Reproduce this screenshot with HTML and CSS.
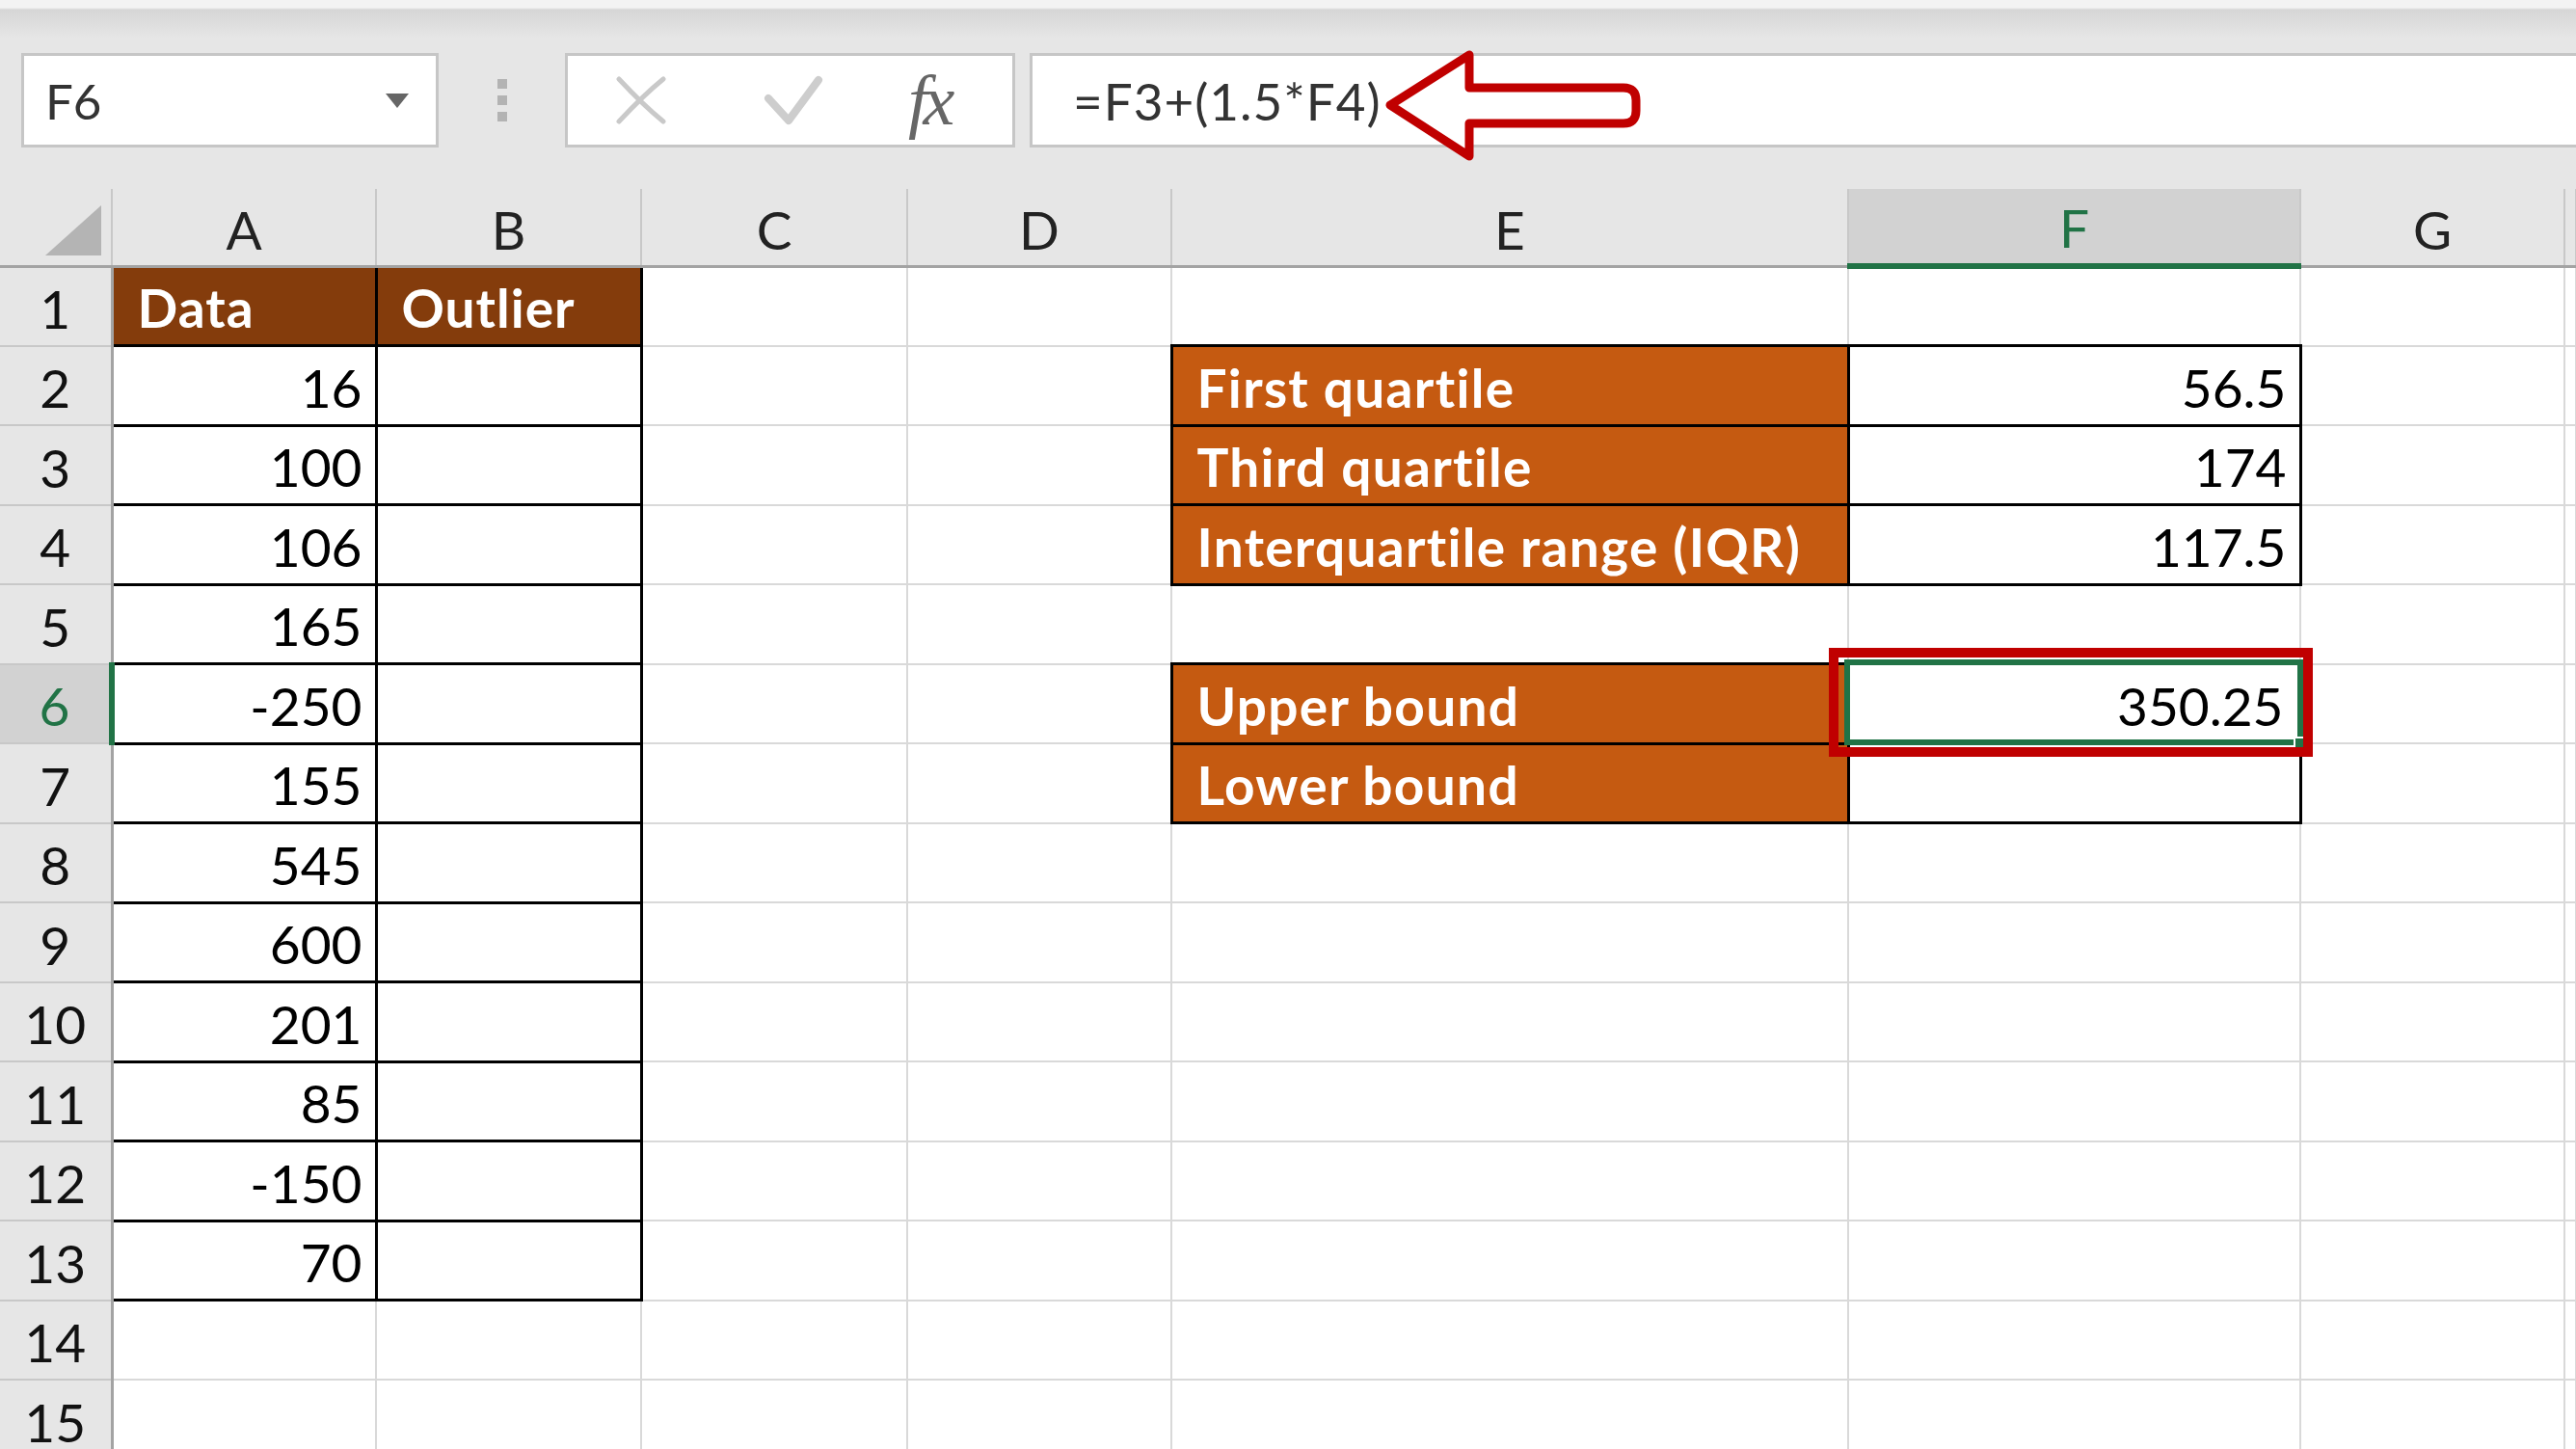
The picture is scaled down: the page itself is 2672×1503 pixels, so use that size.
FILE: index.html
```html
<!DOCTYPE html>
<html lang="en">
<head>
  <meta charset="UTF-8" />
  <meta name="viewport" content="width=device-width, initial-scale=1.0"/>
  <title>Outliers - Upper bound</title>
  <link rel="stylesheet" href="styles.css">
</head>
<body>
  <div class="toolbar">
    <div class="ribbon-edge"></div>
    <div class="formula-bar">
      <div class="name-box">
        <span>F6</span>
        <span class="caret"></span>
      </div>
      <div class="grip"><i></i><i></i><i></i></div>
      <div class="buttons">
        <svg class="icon-cancel" width="54" height="50" viewBox="0 0 54 50">
          <path d="M4 3 C18 18 34 34 50 47 M50 3 C34 16 18 32 4 47" fill="none" stroke="#c9c9c9" stroke-width="5" stroke-linecap="round"/>
        </svg>
        <svg class="icon-enter" width="62" height="52" viewBox="0 0 62 52">
          <path d="M5 24 L26 47 L57 5" fill="none" stroke="#cdcdcd" stroke-width="8" stroke-linejoin="round" stroke-linecap="round"/>
        </svg>
        <span class="fx">fx</span>
      </div>
      <div class="formula-input">
        <span>=F3+(1.5*F4)</span>
      </div>
    </div>
    <!-- annotation arrow pointing at the formula -->
    <svg class="arrow" width="300" height="130" viewBox="1420 46 300 130">
      <path d="M1442 109 L1524 57 L1524 91 L1684 91 Q1697 91 1697 104 L1697 115 Q1697 128 1684 128 L1524 128 L1524 162 Z"
            fill="#ffffff" stroke="#c00000" stroke-width="9" stroke-linejoin="round"/>
    </svg>
  </div>

  <table class="sheet">
    <colgroup>
      <col class="c-row"><col class="c-a"><col class="c-b"><col class="c-c"><col class="c-d">
      <col class="c-e"><col class="c-f"><col class="c-g"><col class="c-h">
    </colgroup>
    <thead>
      <tr>
        <th class="corner"><span class="tri"></span></th>
        <th>A</th><th>B</th><th>C</th><th>D</th><th>E</th>
        <th class="active">F</th><th>G</th><th></th>
      </tr>
    </thead>
    <tbody>
      <tr><th>1</th><td class="box head">Data</td><td class="box head">Outlier</td><td></td><td></td><td></td><td></td><td></td><td></td></tr>
      <tr><th>2</th><td class="box num">16</td><td class="box"></td><td></td><td></td><td class="box label">First quartile</td><td class="box num">56.5</td><td></td><td></td></tr>
      <tr><th>3</th><td class="box num">100</td><td class="box"></td><td></td><td></td><td class="box label">Third quartile</td><td class="box num">174</td><td></td><td></td></tr>
      <tr><th>4</th><td class="box num">106</td><td class="box"></td><td></td><td></td><td class="box label">Interquartile range (IQR)</td><td class="box num">117.5</td><td></td><td></td></tr>
      <tr><th>5</th><td class="box num">165</td><td class="box"></td><td></td><td></td><td></td><td></td><td></td><td></td></tr>
      <tr>
        <th class="active">6</th><td class="box num">-250</td><td class="box"></td><td></td><td></td><td class="box label">Upper bound</td>
        <td class="box num current">350.25<div class="sel"></div><div class="handle"></div><div class="callout"></div></td>
        <td></td><td></td>
      </tr>
      <tr><th>7</th><td class="box num">155</td><td class="box"></td><td></td><td></td><td class="box label">Lower bound</td><td class="box num"></td><td></td><td></td></tr>
      <tr><th>8</th><td class="box num">545</td><td class="box"></td><td></td><td></td><td></td><td></td><td></td><td></td></tr>
      <tr><th>9</th><td class="box num">600</td><td class="box"></td><td></td><td></td><td></td><td></td><td></td><td></td></tr>
      <tr><th>10</th><td class="box num">201</td><td class="box"></td><td></td><td></td><td></td><td></td><td></td><td></td></tr>
      <tr><th>11</th><td class="box num">85</td><td class="box"></td><td></td><td></td><td></td><td></td><td></td><td></td></tr>
      <tr><th>12</th><td class="box num">-150</td><td class="box"></td><td></td><td></td><td></td><td></td><td></td><td></td></tr>
      <tr><th>13</th><td class="box num">70</td><td class="box"></td><td></td><td></td><td></td><td></td><td></td><td></td></tr>
      <tr><th>14</th><td></td><td></td><td></td><td></td><td></td><td></td><td></td><td></td></tr>
      <tr><th>15</th><td></td><td></td><td></td><td></td><td></td><td></td><td></td><td></td></tr>
    </tbody>
  </table>
</body>
</html>
```

FILE: styles.css
```css
html, body {
  margin: 0;
  padding: 0;
  height: 1503px;
  overflow: hidden;
  background-color: #ffffff;
  font-family: Lato, "Open Sans", sans-serif;
  color: #000000;
}
.toolbar {
  position: relative;
  height: 196px;
  background-color: #e6e6e6;
}
.ribbon-edge {
  height: 40px;
  background: linear-gradient(#f3f3f3 0, #f3f3f3 8px, #d6d6d6 10px, #e6e6e6 40px);
}
.formula-bar {
  display: flex;
  align-items: center;
  height: 98px;
  margin-top: 15px;
  padding-left: 22px;
}
.name-box {
  display: flex;
  align-items: center;
  justify-content: space-between;
  box-sizing: border-box;
  width: 433px;
  height: 98px;
  padding: 0 28px 0 22px;
  background-color: #ffffff;
  border: 3px solid #c6c6c6;
  font-size: 51px;
  color: #333333;
}
.caret {
  width: 0;
  height: 0;
  border-left: 12px solid transparent;
  border-right: 12px solid transparent;
  border-top: 15px solid #666666;
}
.grip {
  display: flex;
  flex-direction: column;
  gap: 7px;
  margin: 0 60px 0 61px;
}
.grip i {
  display: block;
  width: 10px;
  height: 10px;
  background-color: #b3b3b3;
}
.buttons {
  display: flex;
  align-items: center;
  box-sizing: border-box;
  width: 467px;
  height: 98px;
  padding-left: 49px;
  background-color: #ffffff;
  border: 3px solid #c6c6c6;
}
.icon-enter {
  margin-left: 100px;
}
.fx {
  margin-left: 88px;
  font-family: "Liberation Serif", serif;
  font-style: italic;
  font-size: 74px;
  color: #666666;
  letter-spacing: -5px;
}
.formula-input {
  display: flex;
  align-items: center;
  flex: 1;
  box-sizing: border-box;
  height: 98px;
  margin-left: 15px;
  padding-left: 42px;
  background-color: #ffffff;
  border: 3px solid #c6c6c6;
  border-right: none;
  font-size: 53px;
  color: #333333;
  letter-spacing: 1px;
}
.arrow {
  position: absolute;
  left: 1420px;
  top: 46px;
}

/* grid */
.sheet {
  border-collapse: collapse;
  table-layout: fixed;
  width: 2672px;
  font-size: 55px;
}
.c-row { width: 116px; }
.c-a { width: 274px; }
.c-b { width: 275px; }
.c-c { width: 276px; }
.c-d { width: 274px; }
.c-e { width: 702px; }
.c-f { width: 469px; }
.c-g { width: 274px; }
.c-h { width: 12px; }
.sheet thead th {
  height: 73px;
  padding: 0 0 4px;
  vertical-align: bottom;
  line-height: 66px;
  background-color: #e6e6e6;
  font-weight: normal;
  color: #222222;
  border-right: 2px solid #c8c8c8;
  border-bottom: 3px solid #a3a3a3;
}
.sheet thead th.active {
  background-color: #d2d2d2;
  color: #217346;
  border-bottom: 6px solid #217346;
}
.sheet thead th.corner {
  position: relative;
}
.tri {
  position: absolute;
  right: 10px;
  bottom: 10px;
  width: 0;
  height: 0;
  border-left: 58px solid transparent;
  border-bottom: 52px solid #b4b4b4;
}
.sheet tbody tr {
  height: 82.5px;
}
.sheet tbody th {
  padding: 0 0 5px;
  vertical-align: bottom;
  line-height: 66px;
  background-color: #e6e6e6;
  font-weight: normal;
  color: #111111;
  border-right: 3px solid #a3a3a3;
  border-bottom: 2px solid #c8c8c8;
}
.sheet tbody th.active {
  background-color: #d2d2d2;
  color: #217346;
  border-right: 6px solid #217346;
}
.sheet td {
  padding: 0 13px 5px 25px;
  vertical-align: bottom;
  line-height: 66px;
  white-space: nowrap;
  border: 2px solid #d9d9d9;
}
.sheet td.box {
  border: 3px solid #000000;
}
.sheet td.head {
  background-color: #843c0c;
  color: #ffffff;
  font-weight: bold;
  letter-spacing: 1px;
}
.sheet td.label {
  background-color: #c55a11;
  color: #ffffff;
  font-weight: bold;
  letter-spacing: 1.3px;
}
.sheet td.num {
  text-align: right;
}
.sheet td.current {
  position: relative;
  padding-right: 16px;
}
.sel {
  position: absolute;
  top: -6px;
  left: -6px;
  right: -4px;
  bottom: -3px;
  border: 6px solid #217346;
}
.handle {
  position: absolute;
  right: -8px;
  bottom: -8px;
  width: 10px;
  height: 10px;
  background-color: #217346;
  border: 2px solid #ffffff;
}
.callout {
  position: absolute;
  top: -18px;
  left: -22px;
  right: -14px;
  bottom: -15px;
  border: 10px solid #c00000;
}
```
